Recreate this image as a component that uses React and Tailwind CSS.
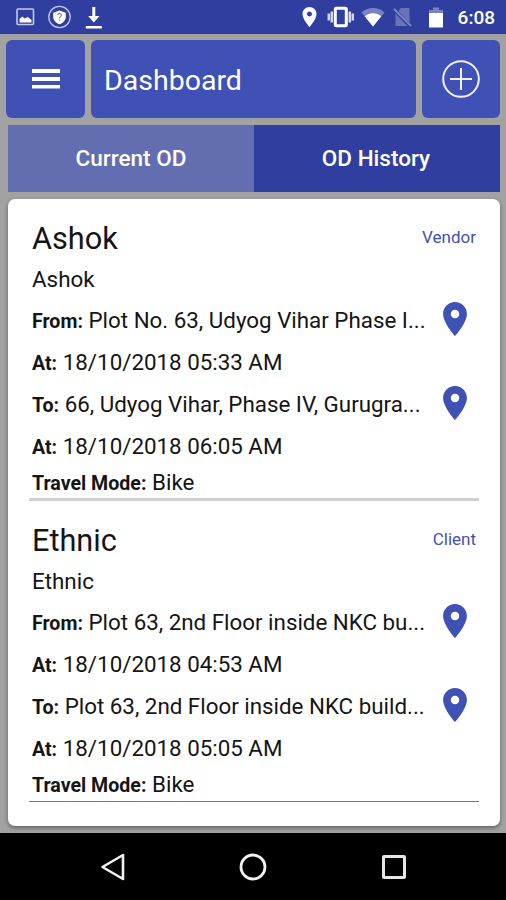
import React from "react";

const visits = [
  {
    id: 1,
    name: "Ashok",
    type: "Vendor",
    contact: "Ashok",
    from: "Plot No. 63, Udyog Vihar Phase I...",
    fromTime: "18/10/2018 05:33 AM",
    to: "66, Udyog Vihar, Phase IV, Gurugra...",
    toTime: "18/10/2018 06:05 AM",
    mode: "Bike",
  },
  {
    id: 2,
    name: "Ethnic",
    type: "Client",
    contact: "Ethnic",
    from: "Plot 63, 2nd Floor inside NKC bu...",
    fromTime: "18/10/2018 04:53 AM",
    to: "Plot 63, 2nd Floor inside NKC build...",
    toTime: "18/10/2018 05:05 AM",
    mode: "Bike",
  },
];

const PinIcon = ({ className }) => (
  <svg className={className} viewBox="5 2 14 20" fill="currentColor">
    <path d="M12 2C8.13 2 5 5.13 5 9c0 5.25 7 13 7 13s7-7.75 7-13c0-3.87-3.13-7-7-7zm0 9.5a2.5 2.5 0 0 1 0-5 2.5 2.5 0 0 1 0 5z" />
  </svg>
);

const StatusBar = () => (
  <div className="flex h-[34px] shrink-0 items-center justify-between bg-[#303f9f] pl-4 pr-[11px] text-white">
    <div className="flex items-center">
      <svg className="h-[18px] w-[19px]" viewBox="0 0 19 18">
        <rect x="1" y="1" width="16.5" height="15.5" rx="1" fill="none" stroke="#c3c8e6" strokeWidth="1.6" />
        <path d="M3.5 14.5V11l2.8-2.5 2.5 2 3-1.5 3.7 3v2.5z" fill="#fff" />
      </svg>
      <svg className="ml-3 h-6 w-6" viewBox="0 0 24 24">
        <circle cx="12.5" cy="12" r="10.7" fill="none" stroke="#c3c8e6" strokeWidth="1.3" />
        <path d="M12.5 5.5l6.3 2.3v4.2c0 3.3-2.5 5.7-6.3 7.3-3.8-1.6-6.3-4-6.3-7.3V7.8z" fill="#fff" />
        <path d="M10.8 10.2a1.8 1.8 0 1 1 2.7 1.5c-.8.5-1 .8-1 1.6M12.5 14.5v1.2" fill="none" stroke="#7f89c6" strokeWidth="1.3" />
      </svg>
      <svg className="ml-3.5 h-[23px] w-[18px]" viewBox="0 0 18 23" fill="#fff">
        <path d="M7.3 1h3v9h4.2L8.8 16.5 3.1 10h4.2zM.8 20h16v2.5H.8z" />
      </svg>
    </div>
    <div className="flex items-center">
      <PinIcon className="h-5 w-[15px]" />
      <svg className="ml-2.5 h-[22px] w-7" viewBox="0 0 28 22">
        <path d="M1.8 7.5v7M4.8 5.5v11M25.8 7.5v7M22.8 5.5v11" stroke="#d3d7ee" strokeWidth="2.5" />
        <rect x="8.3" y="2.2" width="11" height="17.6" rx="1" fill="none" stroke="#fff" strokeWidth="3" />
      </svg>
      <svg className="ml-1.5 h-5 w-6" viewBox="0 0 24 20">
        <path d="M12 19.5L.5 5.5C3.5 2.5 7.5 1 12 1s8.5 1.5 11.5 4.5z" fill="#7983c1" />
        <path d="M12 19.5L3.7 9.3C6 7.3 8.8 6.3 12 6.3s6 1 8.300 3z" fill="#fff" />
      </svg>
      <svg className="ml-2 h-5 w-[19px]" viewBox="0 0 19 20">
        <path d="M8 1h8.5v15L5.5 4zM2.5 6.5L14.5 19h-12z" fill="#6873ba" />
        <path d="M1 2l17 17" stroke="#7c86c4" strokeWidth="1.8" />
      </svg>
      <svg className="ml-4 h-[21px] w-4" viewBox="0 0 16 21">
        <path d="M5 .5h6V3h4v4H1V3h4z" fill="#7983c1" />
        <path d="M1 6h14v14.5H1z" fill="#fff" />
      </svg>
      <span className="ml-3.5 text-[19px] font-medium leading-none">6:08</span>
    </div>
  </div>
);

const Header = () => (
  <div className="flex h-[78px] gap-1.5 text-white">
    <button className="flex w-[79px] items-center justify-center rounded-[6px] bg-[#3f51b5]">
      <svg className="h-5 w-7" viewBox="0 0 28 20" fill="#fff">
        <path d="M0 0h28v4H0zM0 8h28v4H0zM0 16h28v3.6H0z" />
      </svg>
    </button>
    <div className="flex w-[326px] items-center rounded-[6px] bg-[#3f51b5] pl-[13px] pt-[5px]">
      <h1 className="text-[28.5px] leading-none">Dashboard</h1>
    </div>
    <button className="flex w-[78px] items-center justify-center rounded-[6px] bg-[#3f51b5]">
      <svg className="h-[38px] w-[38px]" viewBox="0 0 38 38" fill="none" stroke="#f0f2ff" strokeWidth="2">
        <circle cx="19" cy="19" r="17.8" />
        <path d="M19 8v22M8 19h22" />
      </svg>
    </button>
  </div>
);

const Field = ({ label, value }) => (
  <p className="-mt-px flex items-baseline gap-[5.6px] whitespace-nowrap leading-none">
    <span className="text-[19.6px] font-bold">{label}</span>
    <span className="text-[22.35px]">{value}</span>
  </p>
);

const AddressRow = ({ label, value }) => (
  <div className="flex h-[41.8px] items-center justify-between pr-[9px]">
    <Field label={label} value={value} />
    <PinIcon className="-mt-[3px] h-[34px] w-6 shrink-0 text-[#3f51b5]" />
  </div>
);

const VisitItem = ({ visit, last }) => (
  <div className="px-[3px] pt-[17.5px]">
    <div className="flex h-[41.8px] items-center justify-between">
      <h2 className="mt-[3px] text-[30.7px] leading-none">{visit.name}</h2>
      <span className="mt-px text-[17px] leading-none text-[#3f51b5]">{visit.type}</span>
    </div>
    <p className="flex h-[41.8px] items-center text-[22.4px] leading-none">{visit.contact}</p>
    <AddressRow label="From:" value={visit.from} />
    <div className="flex h-[41.8px] items-center">
      <Field label="At:" value={visit.fromTime} />
    </div>
    <AddressRow label="To:" value={visit.to} />
    <div className="flex h-[41.8px] items-center">
      <Field label="At:" value={visit.toTime} />
    </div>
    <div className="flex h-[30.7px] items-center">
      <Field label="Travel Mode:" value={visit.mode} />
    </div>
    {last ? (
      <div className="-mx-[3px] mt-px h-px bg-[#777]" />
    ) : (
      <div className="-mx-[3px] h-[3px] bg-[#d0d0d0]" />
    )}
  </div>
);

const App = () => {
  return (
    <div className="flex h-[900px] w-[506px] flex-col overflow-hidden bg-[#a2a2a2] font-[Roboto,sans-serif] text-[#151515]">
      <StatusBar />
      <div className="flex-1 px-[6.4px] pt-1.5">
        <Header />
        <div className="mt-[7px] ml-[1.6px] grid h-[67px] w-[492px] grid-cols-2 text-[22.5px] font-medium text-white">
          <button className="bg-[#626eb0] pt-px">Current OD</button>
          <button className="bg-[#303f9f] pr-0.5 pt-px">OD History</button>
        </div>
        <div className="mt-[7px] ml-[1.6px] h-[627px] w-[492px] rounded-[7px] bg-white px-[21px] shadow-[0_2px_4px_rgba(0,0,0,0.4)]">
          {visits.map((visit, index) => (
            <VisitItem key={visit.id} visit={visit} last={index === visits.length - 1} />
          ))}
        </div>
      </div>
      <div className="flex h-[67px] shrink-0 items-center justify-center gap-[114px] bg-black">
        <svg className="h-7 w-[26px]" viewBox="0 0 26 28" fill="none" stroke="#f2f2f2" strokeWidth="2.6" strokeLinejoin="round">
          <path d="M24 2v24L3.5 14z" />
        </svg>
        <svg className="h-7 w-7" viewBox="0 0 28 28" fill="none" stroke="#f2f2f2" strokeWidth="2.8">
          <circle cx="14" cy="14" r="12" />
        </svg>
        <svg className="h-[26px] w-[26px]" viewBox="0 0 26 26" fill="none" stroke="#e6e6e6" strokeWidth="3">
          <rect x="2.5" y="2.5" width="21" height="21" rx="0.5" />
        </svg>
      </div>
    </div>
  );
};

export default App;
